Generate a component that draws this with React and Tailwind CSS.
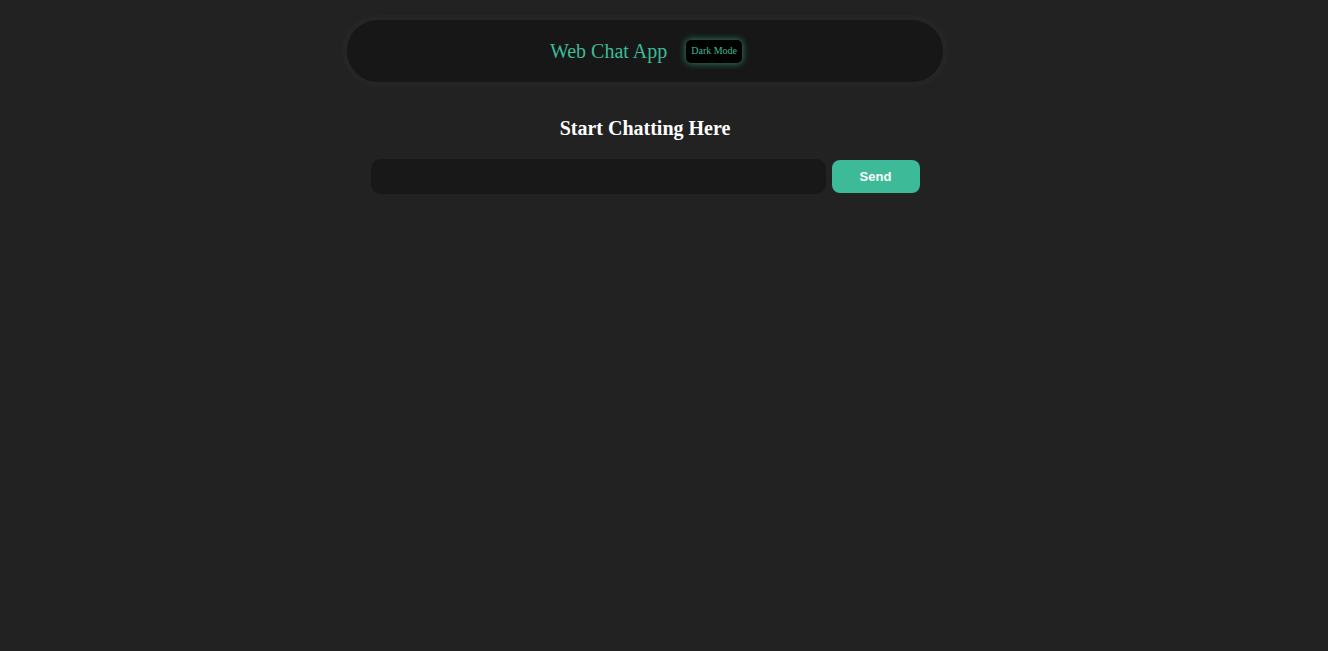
export default function App() {
    return (
        <div className="min-h-[651px] w-full bg-[#222222] font-['Liberation_Serif',serif]">
            <div className="flex flex-col items-center pr-[38px] pt-[15px]">
                <header className="w-[606px] rounded-[36px] border-[5px] border-[#252525] bg-[#171717]">
                    <div className="flex h-[62px] items-center justify-center gap-[19px] pl-[2px]">
                        <h1 className="text-[20px] leading-none text-[#3dbb98]">Web Chat App</h1>
                        <button className="h-[23px] rounded-[5px] bg-black px-[5px] text-[10px] leading-none text-[#3dbb98] shadow-[0_0_6px_1px_rgba(61,187,152,0.55)]">
                            Dark Mode
                        </button>
                    </div>
                </header>

                <h2 className="mt-[31px] text-[20px] font-bold leading-none text-white">Start Chatting Here</h2>

                <div className="mt-[21px] flex items-center gap-[6px]">
                    <input
                        type="text"
                        className="h-[35px] w-[455px] rounded-[10px] bg-[#181818] px-3 text-white outline-none"
                    />
                    <button className="h-[33px] w-[88px] rounded-[8px] bg-[#3dbb98] font-['Liberation_Sans',sans-serif] text-[13px] font-bold text-white">
                        Send
                    </button>
                </div>
            </div>
        </div>
    )
}
